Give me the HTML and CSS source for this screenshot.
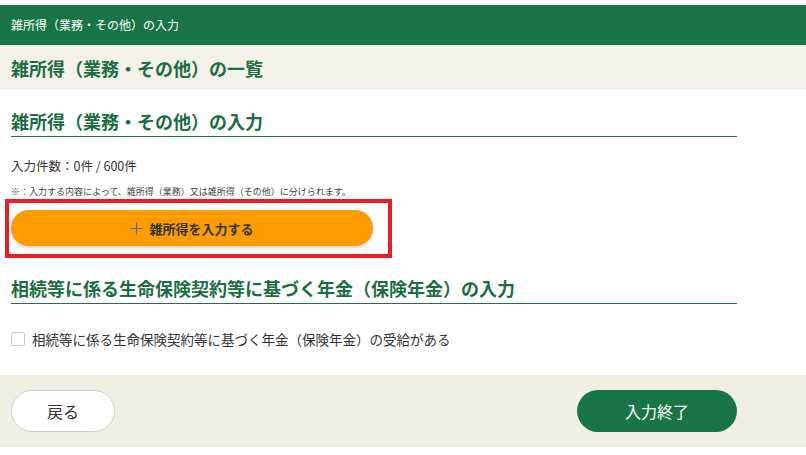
FILE: index.html
```html
<!DOCTYPE html>
<html lang="ja">
<head>
<meta charset="utf-8">
<title>雑所得（業務・その他）の入力</title>
<link rel="stylesheet" href="styles.css">
</head>
<body>
<div class="page">
  <header class="topbar">雑所得（業務・その他）の入力</header>
  <div class="listband"><h1 class="listtitle">雑所得（業務・その他）の一覧</h1></div>
  <main class="content">
    <h2 class="sectitle first">雑所得（業務・その他）の入力</h2>
    <p class="count">入力件数：0件 / 600件</p>
    <p class="note">※：入力する内容によって、雑所得（業務）又は雑所得（その他）に分けられます。</p>
    <div class="highlight">
      <button class="addbtn" type="button">
        <svg class="plus" width="13" height="13" viewBox="0 0 13 13"><path d="M6.5 0.5v12M0.5 6.5h12" stroke="#666" stroke-width="1.2" fill="none"/></svg>
        <span>雑所得を入力する</span>
      </button>
    </div>
    <h2 class="sectitle second">相続等に係る生命保険契約等に基づく年金（保険年金）の入力</h2>
    <label class="checkrow"><span class="checkbox"></span><span class="checklabel">相続等に係る生命保険契約等に基づく年金（保険年金）の受給がある</span></label>
  </main>
  <footer class="footer">
    <div class="footer-inner">
      <button class="backbtn" type="button">戻る</button>
      <button class="donebtn" type="button">入力終了</button>
    </div>
  </footer>
</div>
</body>
</html>
```
FILE: styles.css
```css
* { box-sizing: border-box; }
body {
  margin: 0;
  background: #fff;
  font-family: "Noto Sans CJK JP", "Noto Sans", sans-serif;
  color: #333;
}
.page { padding-top: 5px; }
.topbar {
  height: 40px;
  background: #1a7546;
  color: #fff;
  font-size: 12px;
  line-height: 40px;
  padding-left: 11px;
}
.listband {
  height: 45px;
  background: #f4f1ea;
  display: flex;
  align-items: center;
  padding-left: 11px;
}
.listtitle {
  margin: 0;
  font-size: 18px;
  font-weight: bold;
  color: #1a6e40;
  line-height: 26px;
}
.content {
  padding: 0 11px;
  width: 748px;
}
.sectitle {
  margin: 0;
  font-size: 18px;
  font-weight: bold;
  color: #1a6e40;
  line-height: 26px;
  padding-bottom: 2px;
  border-bottom: 1.5px solid #1f7447;
}
.sectitle.first { margin-top: 18px; }
.sectitle.second { margin-top: 17px; }
.count {
  margin: 19.5px 0 0;
  font-size: 12.5px;
  line-height: 18px;
  color: #333;
}
.note {
  margin: 11.5px 0 0;
  font-size: 9px;
  line-height: 12px;
  color: #444;
}
.highlight {
  margin: 1px 0 0 -6px;
  width: 387px;
  border: 4px solid #ec1c24;
  padding: 7px 15px 8px 2px;
}
.addbtn {
  display: flex;
  align-items: center;
  justify-content: center;
  gap: 6px;
  width: 362px;
  height: 36px;
  border: none;
  border-radius: 18px;
  background: #fd9d00;
  box-shadow: 0 2px 3px rgba(0,0,0,0.18);
  font-family: inherit;
  font-size: 13px;
  font-weight: bold;
  color: #333;
  padding: 0;
}
.plus { display: block; }
.checkrow {
  display: flex;
  align-items: center;
  gap: 7px;
  margin-top: 25px;
  height: 20px;
}
.checkbox {
  width: 14px;
  height: 14px;
  border: 1px solid #cfc9bd;
  border-radius: 2px;
  background: #fff;
}
.checklabel {
  font-size: 13.5px;
  line-height: 20px;
  color: #333;
}
.footer {
  margin-top: 26px;
  height: 72px;
  background: #f1eee4;
  padding: 15px 11px 0;
}
.footer-inner {
  width: 726px;
  display: flex;
  justify-content: space-between;
}
.backbtn {
  width: 104px;
  height: 42px;
  border-radius: 21px;
  border: 1px solid #d6d0c3;
  background: #fff;
  font-family: inherit;
  font-size: 16px;
  color: #333;
}
.donebtn {
  width: 160px;
  height: 42px;
  border-radius: 21px;
  border: none;
  background: #1a7546;
  font-family: inherit;
  font-size: 16px;
  color: #fff;
}
```
